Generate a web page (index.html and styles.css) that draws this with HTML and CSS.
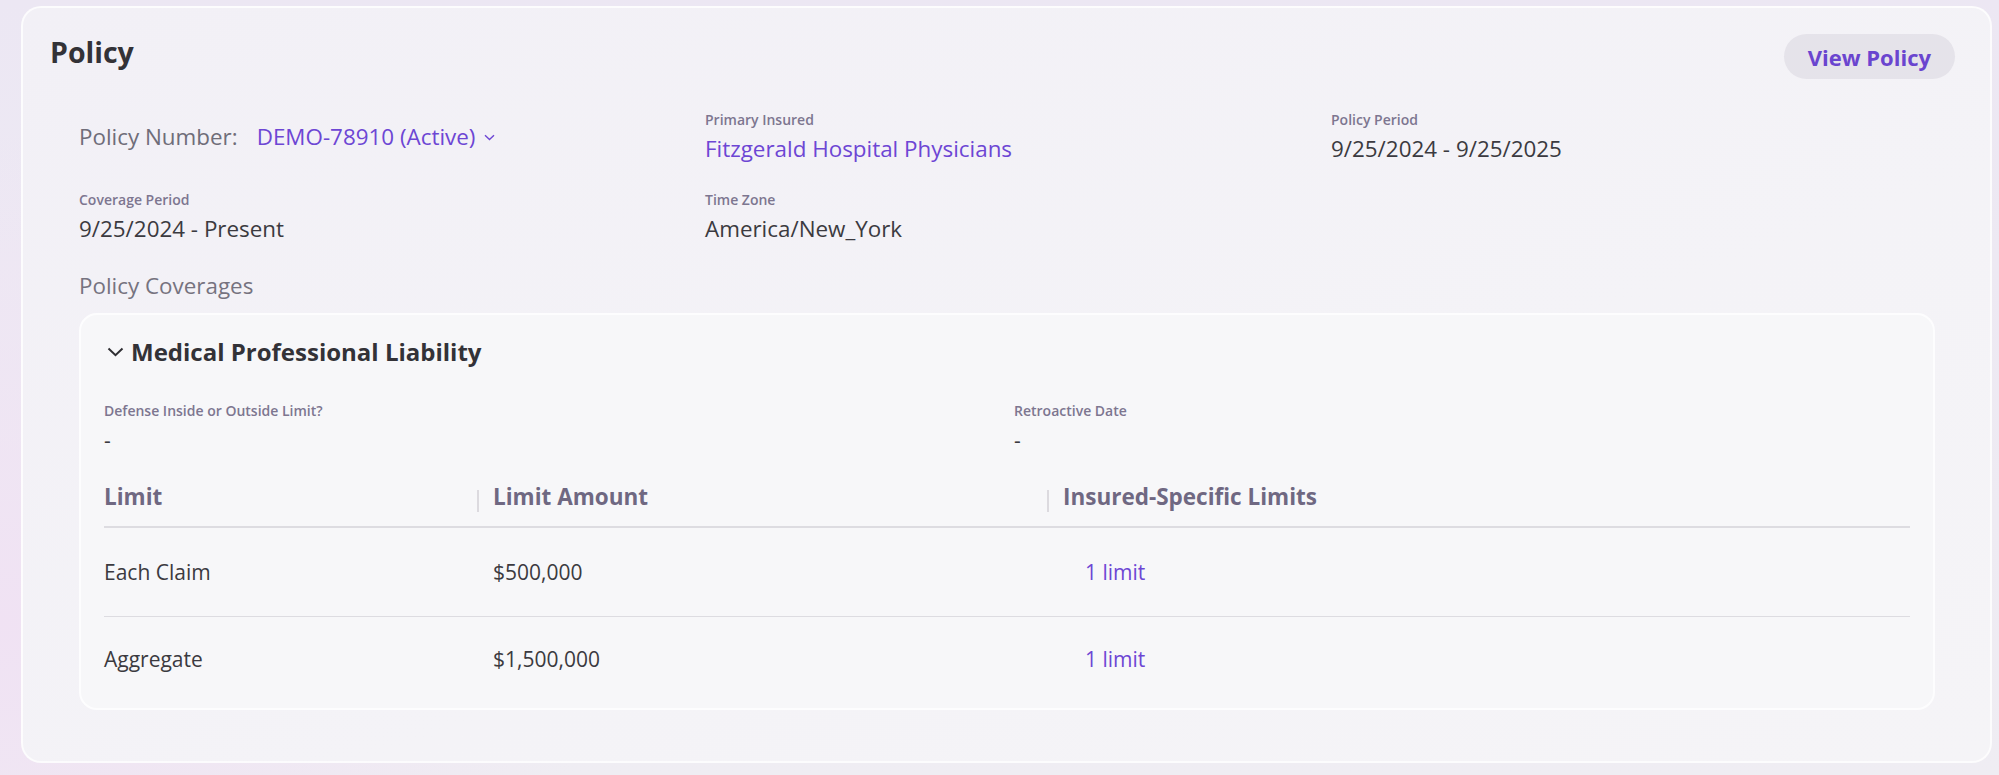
FILE: index.html
```html
<!DOCTYPE html>
<html>
<head>
    <title>Policy</title>
    <link rel="stylesheet" href="styles.css">
    <meta name="viewport" content="width=device-width, initial-scale=1" />
    <meta charset="UTF-8">
</head>
<body>
    <div class="policy-card">
        <div class="policy-header">
            <h1>Policy</h1>
            <button class="view-button">View Policy</button>
        </div>

        <div class="policy-body">
            <div class="detail-grid">
                <div class="policy-number">
                    <span class="policy-number-label">Policy Number:</span>
                    <span class="policy-number-value">DEMO-78910 (Active)
                        <svg width="11" height="7" viewBox="0 0 11 7"><path d="M1 1.2 L5.5 5.5 L10 1.2" fill="none" stroke="#6d46d4" stroke-width="1.4"/></svg>
                    </span>
                </div>
                <div class="field">
                    <div class="field-label">Primary Insured</div>
                    <div class="field-value link">Fitzgerald Hospital Physicians</div>
                </div>
                <div class="field">
                    <div class="field-label">Policy Period</div>
                    <div class="field-value">9/25/2024 - 9/25/2025</div>
                </div>
                <div class="field">
                    <div class="field-label">Coverage Period</div>
                    <div class="field-value">9/25/2024 - Present</div>
                </div>
                <div class="field">
                    <div class="field-label">Time Zone</div>
                    <div class="field-value">America/New_York</div>
                </div>
            </div>

            <div class="section-title">Policy Coverages</div>

            <div class="coverage-card">
                <div class="coverage-title">
                    <svg width="17" height="10" viewBox="0 0 17 10"><path d="M1.5 1.5 L8.5 8.2 L15.5 1.5" fill="none" stroke="#2f2e33" stroke-width="2"/></svg>
                    <span>Medical Professional Liability</span>
                </div>

                <div class="coverage-fields">
                    <div class="field">
                        <div class="field-label">Defense Inside or Outside Limit?</div>
                        <div class="field-value">-</div>
                    </div>
                    <div class="field">
                        <div class="field-label">Retroactive Date</div>
                        <div class="field-value">-</div>
                    </div>
                </div>

                <div class="limits-table">
                    <div class="limits-row limits-head">
                        <div class="cell">Limit</div>
                        <div class="cell"><span class="col-sep"></span>Limit Amount</div>
                        <div class="cell"><span class="col-sep"></span>Insured-Specific Limits</div>
                    </div>
                    <div class="limits-row">
                        <div class="cell">Each Claim</div>
                        <div class="cell amount">$500,000</div>
                        <div class="cell"><a class="limit-link">1 limit</a></div>
                    </div>
                    <div class="limits-row">
                        <div class="cell">Aggregate</div>
                        <div class="cell amount">$1,500,000</div>
                        <div class="cell"><a class="limit-link">1 limit</a></div>
                    </div>
                </div>
            </div>
        </div>
    </div>
</body>
</html>
```

FILE: styles.css
```css
body {
    font-family: 'Open Sans', 'Noto Sans', sans-serif;
    margin: 0;
    padding: 6px 7px 14px 21px;
    color: #3b3a40;
    background:
        radial-gradient(ellipse 600px 500px at 0% 80%, #f0e2f3 0%, rgba(240, 226, 243, 0) 100%),
        linear-gradient(180deg, #ece7f3 0%, #efedf3 100%);
    min-height: 755px;
}

.policy-card {
    background: linear-gradient(160deg, #f2f0f6 0%, #f4f3f7 60%, #f5f4f7 100%);
    border: 2px solid rgba(255, 255, 255, 0.75);
    border-radius: 20px;
    padding: 26px 35px 51px 27px;
}

.policy-header {
    display: flex;
    justify-content: space-between;
    align-items: flex-start;
}

.policy-header h1 {
    margin: 0;
    font-size: 28.5px;
    line-height: 36px;
    font-weight: 700;
    color: #333237;
}

.view-button {
    font-family: inherit;
    height: 45px;
    padding: 0 24px;
    border: none;
    border-radius: 23px;
    background-color: #e5e3ea;
    color: #6a45cf;
    font-size: 22px;
    font-weight: 700;
    cursor: pointer;
}

.policy-body {
    padding: 31px 20px 0 29px;
}

.detail-grid {
    display: grid;
    grid-template-columns: 1fr 1fr 1fr;
    column-gap: 22px;
    row-gap: 26px;
    align-items: center;
}

.policy-number {
    display: flex;
    align-items: baseline;
    gap: 19px;
    font-size: 22.4px;
    line-height: 30px;
}

.policy-number-label {
    color: #6f6d79;
}

.policy-number-value {
    color: #6d46d4;
    display: flex;
    align-items: center;
    gap: 9px;
}

.field-label {
    font-size: 14px;
    line-height: 19px;
    font-weight: 600;
    color: #7d7690;
}

.field-value {
    margin-top: 5px;
    font-size: 22.4px;
    line-height: 30px;
    color: #3b3a40;
}

.field-value.link {
    color: #6d46d4;
}

.section-title {
    margin-top: 27px;
    font-size: 22.4px;
    line-height: 30px;
    color: #76737f;
}

.coverage-card {
    margin-top: 12px;
    background-color: #f7f7f9;
    border: 2px solid #fdfdfe;
    border-radius: 18px;
    padding: 21px 23px 4px 23px;
}

.coverage-title {
    display: flex;
    align-items: center;
    gap: 7px;
    font-size: 24px;
    line-height: 32px;
    font-weight: 700;
    color: #333237;
    padding-left: 3px;
}

.coverage-fields {
    display: grid;
    grid-template-columns: 1fr 1fr;
    column-gap: 14px;
    margin-top: 33px;
}

.coverage-fields .field-value {
    font-size: 21px;
}

.limits-table {
    margin-top: 8px;
}

.limits-row {
    display: grid;
    grid-template-columns: 373px 570px 1fr;
    height: 88px;
    align-items: center;
    border-bottom: 1px solid #dddce1;
    font-size: 21px;
}

.limits-row:last-child {
    border-bottom: none;
    height: 83px;
    padding-bottom: 4px;
}

.limits-head {
    height: 63px;
    font-size: 22.5px;
    font-weight: 700;
    color: #6f6882;
    border-bottom: 2px solid #dddce1;
}

.limits-head .cell {
    display: flex;
    align-items: center;
    padding-top: 4px;
}

.col-sep {
    width: 2px;
    height: 22px;
    margin: 8px 14px 0 0;
    background-color: #dcdadf;
}

.cell.amount {
    padding-left: 16px;
}

.limit-link {
    padding-left: 38px;
    color: #6d46d4;
    cursor: pointer;
}
```
